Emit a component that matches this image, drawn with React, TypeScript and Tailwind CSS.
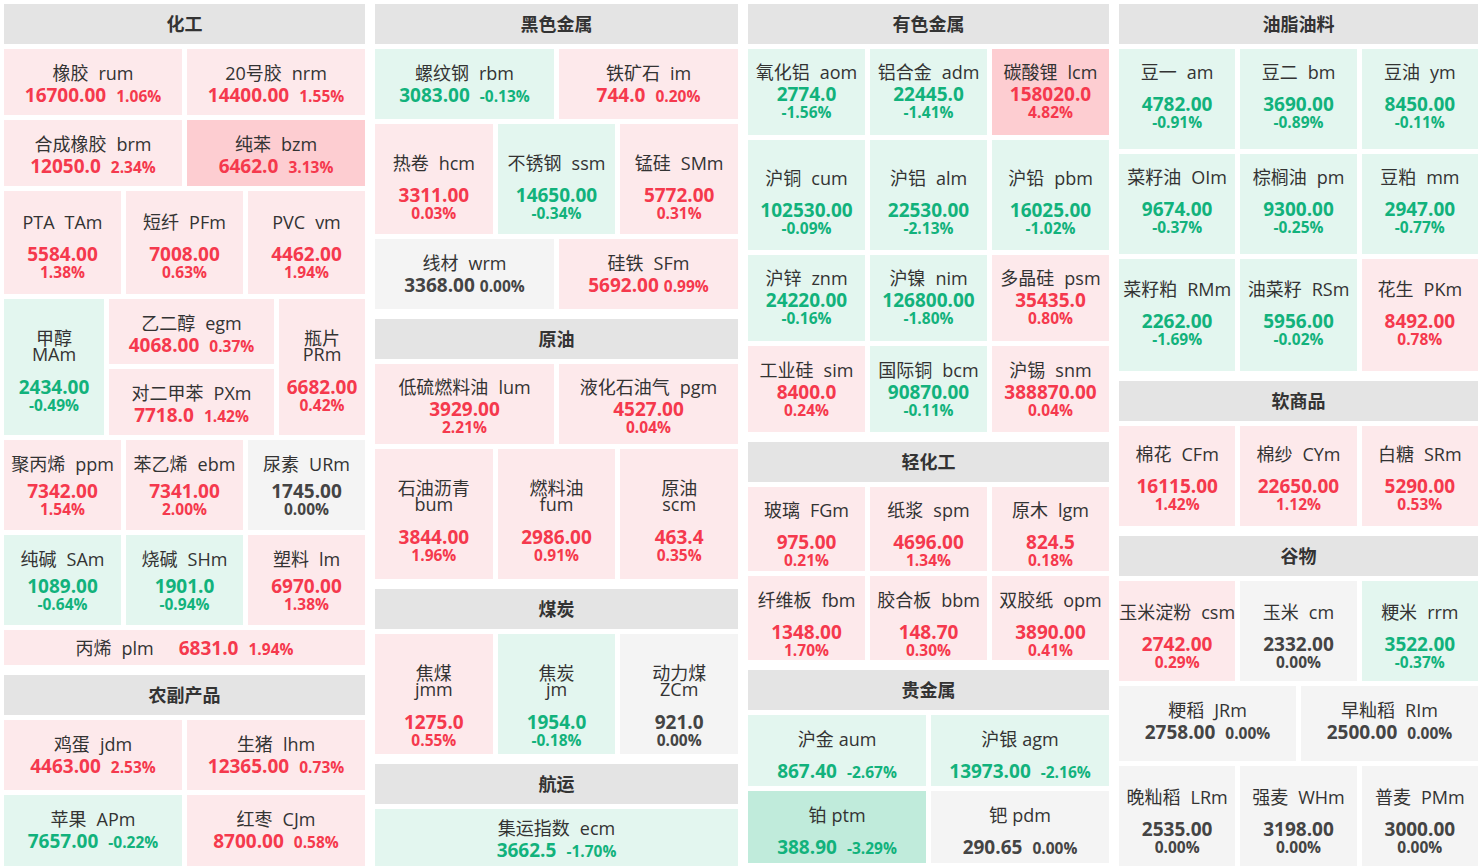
import React from "react";

type K = "r" | "R" | "g" | "G" | "n";
const BG: Record<K, string> = {
  r: "bg-[#fde9eb]",
  R: "bg-[#fdcdd1]",
  g: "bg-[#e3f6ef]",
  G: "bg-[#c0ebdb]",
  n: "bg-[#f4f4f4]",
};
const FG: Record<K, string> = {
  r: "text-[#f5394d]",
  R: "text-[#f5394d]",
  g: "text-[#12b27c]",
  G: "text-[#12b27c]",
  n: "text-[#444444]",
};

type TP = {
  n: string;
  c: string;
  p: string;
  q: string;
  k: K;
  v?: "i" | "s" | "t" | "l";
  pt?: string;
  mt?: string;
  sp?: string;
  qs?: string;
  className?: string;
};

function T({ n, c, p, q, k, v = "s", pt = "pt-[12px]", mt = "", sp = "ml-[10px]", qs = "ml-[10px]", className = "flex-1" }: TP) {
  const base = `${BG[k]} ${className} min-w-0 overflow-hidden flex flex-col items-center ${v === "l" ? "justify-center" : pt}`;
  if (v === "l") {
    return (
      <div className={base}>
        <div className="flex items-baseline whitespace-nowrap">
          <span className="text-[18px] leading-[22px] text-[#333333]">
            {n}
            <span className="ml-[10px]">{c}</span>
          </span>
          <span className={`ml-[25px] text-[19px] font-bold leading-[22px] ${FG[k]}`}>{p}</span>
          <span className={`ml-[10px] text-[15.5px] font-bold leading-[15px] ${FG[k]}`}>{q}</span>
        </div>
      </div>
    );
  }
  if (v === "t") {
    return (
      <div className={base}>
        <div className="text-[18px] leading-[16px] text-[#333333] text-center whitespace-nowrap">
          <div>{n}</div>
          <div>{c}</div>
        </div>
        <div className={`mt-[14px] text-[19px] font-bold leading-[22px] ${FG[k]}`}>{p}</div>
        <div className={`text-[15.5px] font-bold leading-[14px] ${FG[k]}`}>{q}</div>
      </div>
    );
  }
  const name = (
    <div className="text-[18px] leading-[22px] text-[#333333] whitespace-nowrap">
      {n}
      <span className={sp}>{c}</span>
    </div>
  );
  if (v === "i") {
    return (
      <div className={base}>
        {name}
        <div className={`flex items-baseline whitespace-nowrap ${mt} ${FG[k]}`}>
          <span className="text-[19px] font-bold leading-[22px]">{p}</span>
          <span className={`${qs} text-[15.5px] font-bold leading-[15px]`}>{q}</span>
        </div>
      </div>
    );
  }
  return (
    <div className={base}>
      {name}
      <div className={`${mt} text-[19px] font-bold leading-[22px] whitespace-nowrap ${FG[k]}`}>{p}</div>
      <div className={`text-[15.5px] font-bold leading-[14px] whitespace-nowrap ${FG[k]}`}>{q}</div>
    </div>
  );
}

function H({ t }: { t: string }) {
  return (
    <div className="h-[40px] shrink-0 bg-[#e4e4e4] flex items-center justify-center text-[18px] font-bold text-[#333333]">
      {t}
    </div>
  );
}

function Row({ h, children }: { h: string; children: React.ReactNode }) {
  return <div className={`flex gap-[5px] shrink-0 ${h}`}>{children}</div>;
}

function Sec({ children }: { children: React.ReactNode }) {
  return <div className="flex flex-col gap-[5px]">{children}</div>;
}

export default function App() {
  return (
    <div className="w-[1482px] h-[868px] bg-white overflow-hidden font-['Open_Sans','Noto_Sans_CJK_SC',sans-serif]">
      <div className="flex gap-[10px] pt-[4px] pl-[4px]">
        {/* Column 1 */}
        <div className="w-[361px] flex flex-col gap-[10px]">
          <Sec>
            <H t="化工" />
            <Row h="h-[66px]">
              <T n="橡胶" c="rum" p="16700.00" q="1.06%" k="r" v="i" pt="pt-[13px]" />
              <T n="20号胶" c="nrm" p="14400.00" q="1.55%" k="r" v="i" pt="pt-[13px]" />
            </Row>
            <Row h="h-[66px]">
              <T n="合成橡胶" c="brm" p="12050.0" q="2.34%" k="r" v="i" pt="pt-[13px]" />
              <T n="纯苯" c="bzm" p="6462.0" q="3.13%" k="R" v="i" pt="pt-[13px]" />
            </Row>
            <Row h="h-[103px]">
              <T n="PTA" c="TAm" p="5584.00" q="1.38%" k="r" pt="pt-[20px]" mt="mt-[10px]" />
              <T n="短纤" c="PFm" p="7008.00" q="0.63%" k="r" pt="pt-[20px]" mt="mt-[10px]" />
              <T n="PVC" c="vm" p="4462.00" q="1.94%" k="r" pt="pt-[20px]" mt="mt-[10px]" />
            </Row>
            <Row h="h-[136px]">
              <T n="甲醇" c="MAm" p="2434.00" q="-0.49%" k="g" v="t" pt="pt-[31px]" className="w-[100px]" />
              <div className="w-[165px] flex flex-col gap-[5px]">
                <T n="乙二醇" c="egm" p="4068.00" q="0.37%" k="r" v="i" pt="pt-[13px]" className="h-[65px] shrink-0" />
                <T n="对二甲苯" c="PXm" p="7718.0" q="1.42%" k="r" v="i" pt="pt-[13px]" className="flex-1" />
              </div>
              <T n="瓶片" c="PRm" p="6682.00" q="0.42%" k="r" v="t" pt="pt-[31px]" />
            </Row>
            <Row h="h-[90px]">
              <T n="聚丙烯" c="ppm" p="7342.00" q="1.54%" k="r" pt="pt-[13px]" mt="mt-[5px]" />
              <T n="苯乙烯" c="ebm" p="7341.00" q="2.00%" k="r" pt="pt-[13px]" mt="mt-[5px]" />
              <T n="尿素" c="URm" p="1745.00" q="0.00%" k="n" pt="pt-[13px]" mt="mt-[5px]" />
            </Row>
            <Row h="h-[90px]">
              <T n="纯碱" c="SAm" p="1089.00" q="-0.64%" k="g" pt="pt-[13px]" mt="mt-[5px]" />
              <T n="烧碱" c="SHm" p="1901.0" q="-0.94%" k="g" pt="pt-[13px]" mt="mt-[5px]" />
              <T n="塑料" c="lm" p="6970.00" q="1.38%" k="r" pt="pt-[13px]" mt="mt-[5px]" />
            </Row>
            <Row h="h-[35px]">
              <T n="丙烯" c="plm" p="6831.0" q="1.94%" k="r" v="l" />
            </Row>
          </Sec>
          <Sec>
            <H t="农副产品" />
            <Row h="h-[70px]">
              <T n="鸡蛋" c="jdm" p="4463.00" q="2.53%" k="r" v="i" pt="pt-[13px]" />
              <T n="生猪" c="lhm" p="12365.00" q="0.73%" k="r" v="i" pt="pt-[13px]" />
            </Row>
            <Row h="h-[71px]">
              <T n="苹果" c="APm" p="7657.00" q="-0.22%" k="g" v="i" pt="pt-[13px]" />
              <T n="红枣" c="CJm" p="8700.00" q="0.58%" k="r" v="i" pt="pt-[13px]" />
            </Row>
          </Sec>
        </div>

        {/* Column 2 */}
        <div className="w-[363px] flex flex-col gap-[10px]">
          <Sec>
            <H t="黑色金属" />
            <Row h="h-[70px]">
              <T n="螺纹钢" c="rbm" p="3083.00" q="-0.13%" k="g" v="i" pt="pt-[13px]" />
              <T n="铁矿石" c="im" p="744.0" q="0.20%" k="r" v="i" pt="pt-[13px]" />
            </Row>
            <Row h="h-[110px]">
              <T n="热卷" c="hcm" p="3311.00" q="0.03%" k="r" pt="pt-[28px]" mt="mt-[10px]" />
              <T n="不锈钢" c="ssm" p="14650.00" q="-0.34%" k="g" pt="pt-[28px]" mt="mt-[10px]" />
              <T n="锰硅" c="SMm" p="5772.00" q="0.31%" k="r" pt="pt-[28px]" mt="mt-[10px]" />
            </Row>
            <Row h="h-[70px]">
              <T n="线材" c="wrm" p="3368.00" q="0.00%" k="n" v="i" pt="pt-[13px]" qs="ml-[5px]" />
              <T n="硅铁" c="SFm" p="5692.00" q="0.99%" k="r" v="i" pt="pt-[13px]" qs="ml-[5px]" />
            </Row>
          </Sec>
          <Sec>
            <H t="原油" />
            <Row h="h-[80px]">
              <T n="低硫燃料油" c="lum" p="3929.00" q="2.21%" k="r" pt="pt-[12px]" />
              <T n="液化石油气" c="pgm" p="4527.00" q="0.04%" k="r" pt="pt-[12px]" />
            </Row>
            <Row h="h-[130px]">
              <T n="石油沥青" c="bum" p="3844.00" q="1.96%" k="r" v="t" pt="pt-[31px]" />
              <T n="燃料油" c="fum" p="2986.00" q="0.91%" k="r" v="t" pt="pt-[31px]" />
              <T n="原油" c="scm" p="463.4" q="0.35%" k="r" v="t" pt="pt-[31px]" />
            </Row>
          </Sec>
          <Sec>
            <H t="煤炭" />
            <Row h="h-[120px]">
              <T n="焦煤" c="jmm" p="1275.0" q="0.55%" k="r" v="t" pt="pt-[31px]" />
              <T n="焦炭" c="jm" p="1954.0" q="-0.18%" k="g" v="t" pt="pt-[31px]" />
              <T n="动力煤" c="ZCm" p="921.0" q="0.00%" k="n" v="t" pt="pt-[31px]" />
            </Row>
          </Sec>
          <Sec>
            <H t="航运" />
            <Row h="h-[57px]">
              <T n="集运指数" c="ecm" p="3662.5" q="-1.70%" k="g" v="i" pt="pt-[8px]" />
            </Row>
          </Sec>
        </div>

        {/* Column 3 */}
        <div className="w-[361px] flex flex-col gap-[10px]">
          <Sec>
            <H t="有色金属" />
            <Row h="h-[86px]">
              <T n="氧化铝" c="aom" p="2774.0" q="-1.56%" k="g" pt="pt-[12px]" />
              <T n="铝合金" c="adm" p="22445.0" q="-1.41%" k="g" pt="pt-[12px]" />
              <T n="碳酸锂" c="lcm" p="158020.0" q="4.82%" k="R" pt="pt-[12px]" />
            </Row>
            <Row h="h-[110px]">
              <T n="沪铜" c="cum" p="102530.00" q="-0.09%" k="g" pt="pt-[27px]" mt="mt-[10px]" />
              <T n="沪铝" c="alm" p="22530.00" q="-2.13%" k="g" pt="pt-[27px]" mt="mt-[10px]" />
              <T n="沪铅" c="pbm" p="16025.00" q="-1.02%" k="g" pt="pt-[27px]" mt="mt-[10px]" />
            </Row>
            <Row h="h-[86px]">
              <T n="沪锌" c="znm" p="24220.00" q="-0.16%" k="g" pt="pt-[12px]" />
              <T n="沪镍" c="nim" p="126800.00" q="-1.80%" k="g" pt="pt-[12px]" />
              <T n="多晶硅" c="psm" p="35435.0" q="0.80%" k="r" pt="pt-[12px]" />
            </Row>
            <Row h="h-[86px]">
              <T n="工业硅" c="sim" p="8400.0" q="0.24%" k="r" pt="pt-[13px]" />
              <T n="国际铜" c="bcm" p="90870.00" q="-0.11%" k="g" pt="pt-[13px]" />
              <T n="沪锡" c="snm" p="388870.00" q="0.04%" k="r" pt="pt-[13px]" />
            </Row>
          </Sec>
          <Sec>
            <H t="轻化工" />
            <Row h="h-[84px]">
              <T n="玻璃" c="FGm" p="975.00" q="0.21%" k="r" pt="pt-[12px]" mt="mt-[10px]" />
              <T n="纸浆" c="spm" p="4696.00" q="1.34%" k="r" pt="pt-[12px]" mt="mt-[10px]" />
              <T n="原木" c="lgm" p="824.5" q="0.18%" k="r" pt="pt-[12px]" mt="mt-[10px]" />
            </Row>
            <Row h="h-[84px]">
              <T n="纤维板" c="fbm" p="1348.00" q="1.70%" k="r" pt="pt-[13px]" mt="mt-[10px]" />
              <T n="胶合板" c="bbm" p="148.70" q="0.30%" k="r" pt="pt-[13px]" mt="mt-[10px]" />
              <T n="双胶纸" c="opm" p="3890.00" q="0.41%" k="r" pt="pt-[13px]" mt="mt-[10px]" />
            </Row>
          </Sec>
          <Sec>
            <H t="贵金属" />
            <Row h="h-[71px]">
              <T n="沪金" c="aum" p="867.40" q="-2.67%" k="g" v="i" pt="pt-[13px]" mt="mt-[10px]" sp="ml-[5px]" />
              <T n="沪银" c="agm" p="13973.00" q="-2.16%" k="g" v="i" pt="pt-[13px]" mt="mt-[10px]" sp="ml-[5px]" />
            </Row>
            <Row h="h-[72px]">
              <T n="铂" c="ptm" p="388.90" q="-3.29%" k="G" v="i" pt="pt-[13px]" mt="mt-[10px]" sp="ml-[5px]" />
              <T n="钯" c="pdm" p="290.65" q="0.00%" k="n" v="i" pt="pt-[13px]" mt="mt-[10px]" sp="ml-[5px]" />
            </Row>
          </Sec>
        </div>

        {/* Column 4 */}
        <div className="w-[359px] flex flex-col gap-[10px]">
          <Sec>
            <H t="油脂油料" />
            <Row h="h-[100px]">
              <T n="豆一" c="am" p="4782.00" q="-0.91%" k="g" pt="pt-[12px]" mt="mt-[10px]" />
              <T n="豆二" c="bm" p="3690.00" q="-0.89%" k="g" pt="pt-[12px]" mt="mt-[10px]" />
              <T n="豆油" c="ym" p="8450.00" q="-0.11%" k="g" pt="pt-[12px]" mt="mt-[10px]" />
            </Row>
            <Row h="h-[100px]">
              <T n="菜籽油" c="OIm" p="9674.00" q="-0.37%" k="g" pt="pt-[12px]" mt="mt-[10px]" />
              <T n="棕榈油" c="pm" p="9300.00" q="-0.25%" k="g" pt="pt-[12px]" mt="mt-[10px]" />
              <T n="豆粕" c="mm" p="2947.00" q="-0.77%" k="g" pt="pt-[12px]" mt="mt-[10px]" />
            </Row>
            <Row h="h-[112px]">
              <T n="菜籽粕" c="RMm" p="2262.00" q="-1.69%" k="g" pt="pt-[19px]" mt="mt-[10px]" />
              <T n="油菜籽" c="RSm" p="5956.00" q="-0.02%" k="g" pt="pt-[19px]" mt="mt-[10px]" />
              <T n="花生" c="PKm" p="8492.00" q="0.78%" k="r" pt="pt-[19px]" mt="mt-[10px]" />
            </Row>
          </Sec>
          <Sec>
            <H t="软商品" />
            <Row h="h-[100px]">
              <T n="棉花" c="CFm" p="16115.00" q="1.42%" k="r" pt="pt-[17px]" mt="mt-[10px]" />
              <T n="棉纱" c="CYm" p="22650.00" q="1.12%" k="r" pt="pt-[17px]" mt="mt-[10px]" />
              <T n="白糖" c="SRm" p="5290.00" q="0.53%" k="r" pt="pt-[17px]" mt="mt-[10px]" />
            </Row>
          </Sec>
          <Sec>
            <H t="谷物" />
            <Row h="h-[100px]">
              <T n="玉米淀粉" c="csm" p="2742.00" q="0.29%" k="r" pt="pt-[20px]" mt="mt-[10px]" />
              <T n="玉米" c="cm" p="2332.00" q="0.00%" k="n" pt="pt-[20px]" mt="mt-[10px]" />
              <T n="粳米" c="rrm" p="3522.00" q="-0.37%" k="g" pt="pt-[20px]" mt="mt-[10px]" />
            </Row>
            <Row h="h-[75px]">
              <T n="粳稻" c="JRm" p="2758.00" q="0.00%" k="n" v="i" pt="pt-[13px]" />
              <T n="早籼稻" c="RIm" p="2500.00" q="0.00%" k="n" v="i" pt="pt-[13px]" />
            </Row>
            <Row h="h-[100px]">
              <T n="晚籼稻" c="LRm" p="2535.00" q="0.00%" k="n" pt="pt-[20px]" mt="mt-[10px]" />
              <T n="强麦" c="WHm" p="3198.00" q="0.00%" k="n" pt="pt-[20px]" mt="mt-[10px]" />
              <T n="普麦" c="PMm" p="3000.00" q="0.00%" k="n" pt="pt-[20px]" mt="mt-[10px]" />
            </Row>
          </Sec>
        </div>
      </div>
    </div>
  );
}
